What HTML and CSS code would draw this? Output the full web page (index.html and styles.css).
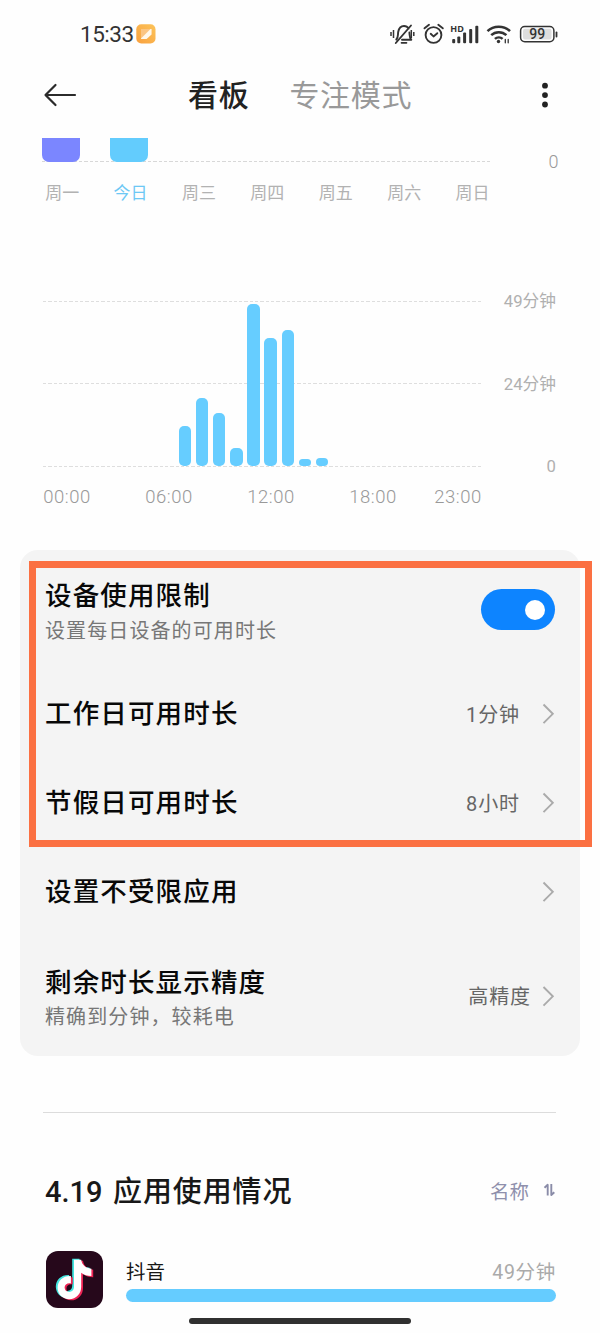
FILE: index.html
```html
<!DOCTYPE html>
<html lang="zh-CN">
<head>
<meta charset="utf-8">
<title>看板</title>
<link rel="stylesheet" href="styles.css">
</head>
<body>
<div class="screen">
  <div class="status">
    <span class="clock">15:33</span>
    <svg class="note" width="20" height="20" viewBox="0 0 20 20"><defs><linearGradient id="ng" x1="1" y1="0" x2="0" y2="1"><stop offset="0" stop-color="#fcc45a"/><stop offset="1" stop-color="#f9a03e"/></linearGradient></defs><rect x=".3" y=".3" width="19.2" height="19.2" rx="5" fill="url(#ng)"/><path d="M5 5h10.500v5.500l-5 4.500H5z" fill="#fbc582"/><path d="M5 14.500L14.500 5h1v5.500l-5 4.500H5z" fill="#fff8ea"/></svg>
    <svg class="sysicons" width="170" height="26" viewBox="0 0 170 26" fill="none" stroke="#333" stroke-width="1.900" stroke-linecap="round" stroke-linejoin="round">
      <path d="M6.300 18.500C8.500 16 7.700 14 8.200 11c.7-4 3-6 5.800-6 2 0 3.600.9 4.600 2.600M12 18.800h9.300c-1.900-2.300-1.600-4-1.900-7.300M5.800 22 21 4.500"/>
      <path d="M11.500 21.800h5" stroke-width="1.700"/>
      <path d="M1 11v4M3.500 9v8M21.300 9v8M23.800 11v4" stroke-width="1.500" stroke-linecap="butt"/>
      <circle cx="43.500" cy="14" r="7.900"/><path d="m40.700 12.800 2.800 2.600 3.800-3.200M34.500 7.300l4.500-3.500M52.800 7.300l-4.500-3.500"/>
      <g stroke="none" fill="#333"><rect x="62.200" y="18" width="3" height="4.200" rx="1"/><rect x="67.300" y="15.500" width="3" height="6.700" rx="1"/><rect x="73.100" y="11.500" width="3" height="10.700" rx="1"/><rect x="79.200" y="8" width="3" height="14.200" rx="1"/><rect x="85.300" y="4.800" width="3" height="17.400" rx="1"/></g>
      <text class="hd" x="60.300" y="10.600">HD</text>
      <path d="M97.500 10.200c6-6 16.500-6 22.500 0M101.200 14.200c4.200-4 11-4 15.200 0M104.900 17.900c2.300-2 5.600-2 7.700 0" stroke-width="2.500" stroke-linecap="butt"/><circle cx="108.500" cy="20.500" r="1.700" fill="#333" stroke="none"/>
      <path d="M115.300 18.500v3.300M118.200 18.500v3.300" stroke-width="1.300"/>
      <rect x="130.600" y="5.500" width="33.300" height="15.200" rx="4.200" stroke-width="1.500"/><rect x="133" y="7.800" width="28.500" height="10.600" rx="2" fill="#dedede" stroke="none"/><path d="M166.500 11.500v4" stroke-width="1.800"/>
      <text class="pct" x="147.200" y="18" text-anchor="middle">99</text>
    </svg>
  </div>
  <header class="top">
    <svg class="back" width="36" height="26" viewBox="0 0 36 26" fill="none" stroke="#2b2b2b" stroke-width="2.200" stroke-linecap="round" stroke-linejoin="round"><path d="M33 13H3.500M13.500 3 3.500 13l10 10"/></svg>
    <h1 class="tab">看板</h1>
    <span class="tab tab-off">专注模式</span>
    <svg class="more" width="8" height="28" viewBox="0 0 8 28" fill="#222"><circle cx="4" cy="4.700" r="2.900"/><circle cx="4" cy="14.100" r="2.900"/><circle cx="4" cy="23.500" r="2.900"/></svg>
  </header>
  <section class="week">
    <div class="week-plot"><div class="week-bars"><span><i class="wbar violet"></i></span><span><i class="wbar"></i></span></div><b class="week-zero">0</b></div>
    <div class="week-days"><span>周一</span><span class="today">今日</span><span>周三</span><span>周四</span><span>周五</span><span>周六</span><span>周日</span></div>
  </section>
  <section class="hours">
    <div class="hour-row">
      <div class="plot">
        <i class="hbar" style="height:40px"></i><i class="hbar" style="height:68px"></i><i class="hbar" style="height:53px"></i><i class="hbar" style="height:18px"></i><i class="hbar" style="height:162px"></i><i class="hbar" style="height:128.500px"></i><i class="hbar" style="height:136px"></i><i class="hbar" style="height:7px"></i><i class="hbar" style="height:8.500px"></i>
      </div>
      <div class="scale"><span>49分钟</span><span>24分钟</span><span>0</span></div>
    </div>
    <div class="ticks"><span>00:00</span><span>06:00</span><span>12:00</span><span>18:00</span><span>23:00</span></div>
  </section>
  <section class="card">
    <div class="row tall"><div class="label"><strong>设备使用限制</strong><small>设置每日设备的可用时长</small></div><span class="switch"><i></i></span></div>
    <div class="row"><strong>工作日可用时长</strong><span class="value">1分钟</span><svg class="chev wide" width="14" height="24" viewBox="0 0 14 24"><path d="m2.500 2.500 9.300 9.300-9.300 9.300"/></svg></div>
    <div class="row"><strong>节假日可用时长</strong><span class="value">8小时</span><svg class="chev wide" width="14" height="24" viewBox="0 0 14 24"><path d="m2.500 2.500 9.300 9.300-9.300 9.300"/></svg></div>
    <div class="row"><strong>设置不受限应用</strong><span class="value"></span><svg class="chev" width="14" height="24" viewBox="0 0 14 24"><path d="m2.500 2.500 9.300 9.300-9.300 9.300"/></svg></div>
    <div class="row last"><div class="label"><strong>剩余时长显示精度</strong><small>精确到分钟，较耗电</small></div><span class="value">高精度</span><svg class="chev" width="14" height="24" viewBox="0 0 14 24"><path d="m2.500 3 9.300 9.300-9.300 9.300"/></svg></div>
    <div class="highlight"></div>
  </section>
  <hr class="rule">
  <div class="usage-head"><h2><span class="date">4.19</span>应用使用情况</h2><span class="sort">名称</span>
    <svg width="13" height="14" viewBox="0 0 13 14" fill="none" stroke="#8a8ca8" stroke-width="1.900" stroke-linejoin="round"><path d="M1.500 4.800 4.700 1.800V12.500M8.300 1v11l3-2.800"/></svg></div>
  <div class="app">
    <svg class="appicon" width="57" height="57" viewBox="0 0 57 57"><rect width="57" height="57" rx="12" fill="#26081b"/><defs><path id="nt" d="M26.800 8.500h7.200c.7 5 4 8.300 10.200 9v7.400c-4 0-7.400-1.200-10.200-3.300v14c0 7-5 12.400-12 12.400-6.400 0-11.600-5-11.600-11.500 0-7 5.600-12 13.300-11.600v7.300c-3.600-.7-6.300 1.200-6.300 4.200 0 2.500 2 4.400 4.500 4.400 3 0 4.900-2 4.900-5.400z"/></defs><use href="#nt" x="-.6" y="-.8" fill="#42e5df"/><use href="#nt" x="3" y="1.300" fill="#ee2455"/><use href="#nt" x="1.200" y=".2" fill="#fff"/></svg>
    <div class="app-info"><div class="app-line"><span>抖音</span><span class="time">49分钟</span></div><div class="meter"></div></div>
  </div>
  <div class="home"></div>
</div>
</body>
</html>
```
FILE: styles.css
```css
* { box-sizing: border-box; }
body { margin: 0; background: #fefefe; font-family: Roboto, "Noto Sans CJK SC", sans-serif; color: #111; }
.screen { width: 600px; height: 1333px; overflow: hidden; display: flex; flex-direction: column; position: relative; }
i { display: block; }
.status { height: 67px; padding: 0 34px 0 80px; display: flex; align-items: center; flex: none; }
.clock { font-size: 22.500px; line-height: 30px; color: #333; width: 56px; letter-spacing: -.5px; white-space: nowrap; }
.sysicons { margin-left: auto; margin-right: 6px; }
.hd { font: 700 9px "Open Sans", sans-serif; fill: #333; stroke: none; }
.pct { font: 500 14px Roboto, sans-serif; fill: #333; stroke: none; }
.top { height: 71px; padding: 0 51px 15px 42px; display: flex; align-items: center; flex: none; }
.tab { margin: 2px 0 0 110px; font-size: 30px; line-height: 44px; font-weight: 500; letter-spacing: .7px; color: #222; }
.tab-off { margin-left: 40px; color: #999; font-weight: 400; }
.more { margin-left: auto; }
.week { height: 163px; flex: none; padding-left: 28px; }
.week-plot { display: flex; height: 24px; margin-left: 13.500px; }
.week-bars { width: 448px; display: flex; gap: 30.600px; background: repeating-linear-gradient(90deg, #d8d8d8 0 3.300px, transparent 3.300px 5.300px) 0 23px / 100% 1px no-repeat; }
.wbar { width: 38px; height: 24px; border-radius: 0 0 7px 7px; background: #63ccfd; }
.wbar.violet { background: #7b86ff; }
.week-zero { width: 69px; text-align: right; font-weight: 300; font-size: 18px; line-height: 48px; color: #999; }
.week-days { display: grid; grid-template-columns: repeat(7, 68.400px); margin-top: 18px; font-size: 17px; line-height: 26px; text-align: center; color: #b2b2b2; }
.today { color: #6dc8f5; }
.hours { height: 249px; flex: none; padding-left: 43px; color: #b0b0b0; }
.hour-row { display: flex; height: 166px; }
.plot { width: 438px; padding: 0 0 1px 136px; display: flex; align-items: flex-end; gap: 4.800px; background:
  repeating-linear-gradient(90deg, #dedede 0 3.300px, transparent 3.300px 5.300px) 0 0 / 100% 1px no-repeat,
  repeating-linear-gradient(90deg, #dedede 0 3.300px, transparent 3.300px 5.300px) 0 82px / 100% 1px no-repeat,
  repeating-linear-gradient(90deg, #dedede 0 3.300px, transparent 3.300px 5.300px) 0 165px / 100% 1px no-repeat; }
.hbar { width: 12.300px; flex: none; border-radius: 5px; background: #66cdff; }
.scale { width: 75px; height: 191px; margin-top: -12px; display: flex; flex-direction: column; justify-content: space-between; text-align: right; line-height: 26px; font-size: 16.700px; }
.ticks { display: grid; grid-template-columns: repeat(5, 48px); column-gap: 54px; margin-top: 17px; font-size: 18.500px; font-weight: 300; color: #999; line-height: 26px; letter-spacing: .5px; text-align: center; white-space: nowrap; }
.ticks span:last-child { margin-left: -17px; margin-right: 17px; }
.card { position: relative; width: 560px; height: 506px; margin-left: 20px; flex: none; border-radius: 18px; background: #f4f4f4; padding: 0 25px; }
.row { height: 89px; display: flex; align-items: center; }
.row.tall { height: 119px; justify-content: space-between; }
.row.last { height: 120px; }
.label { display: flex; flex-direction: column; margin-top: 4px; }
strong { font-size: 26.500px; line-height: 38px; font-weight: 500; letter-spacing: 1.150px; color: #080808; margin-top: 1px; }
.label strong { margin-top: 0; }
.label small { font-size: 20px; line-height: 30px; letter-spacing: 1.100px; color: #777; }
.tall small { margin-top: 1px; }
.value { margin-left: auto; font-size: 20px; line-height: 30px; letter-spacing: .9px; color: #666; margin-top: 2px; }
.chev { margin-left: 10px; fill: none; stroke: #aaa; stroke-width: 1.900; }
.chev.wide { margin-left: 21px; }
.switch { width: 74px; height: 41px; border-radius: 21px; background: #0d84ff; padding: 10.500px; display: flex; justify-content: flex-end; }
.switch i { width: 20px; height: 20px; border-radius: 50%; background: #fff; }
.highlight { position: absolute; left: 9px; top: 11px; width: 563px; height: 286px; border: 7px solid #fb7042; }
.rule { width: 513px; height: 1px; border: 0; background: #dcdcdc; margin: 56px 0 55px 43px; flex: none; }
.usage-head { height: 44px; padding: 0 44px 0 45px; display: flex; align-items: center; flex: none; }
.usage-head h2 { margin: 3px 0 0; display: flex; font-size: 29px; line-height: 44px; font-weight: 500; letter-spacing: .9px; color: #181818; }
.date { width: 68px; letter-spacing: 0; }
.sort { margin-left: auto; margin-right: 14px; font-size: 19.500px; color: #8f90ac; }
.app { display: flex; gap: 23px; padding: 0 44px 0 46px; margin-top: 39px; flex: none; }
.app-info { flex: 1; padding-top: 8px; }
.app-line { display: flex; justify-content: space-between; font-size: 19.500px; line-height: 28px; color: #161616; }
.time { color: #aaa; letter-spacing: .7px; }
.meter { height: 13px; margin-top: 2px; border-radius: 7px; background: #65ccff; }
.home { position: absolute; left: 189px; top: 1318px; width: 222px; height: 6px; border-radius: 3px; background: #303030; }
```
